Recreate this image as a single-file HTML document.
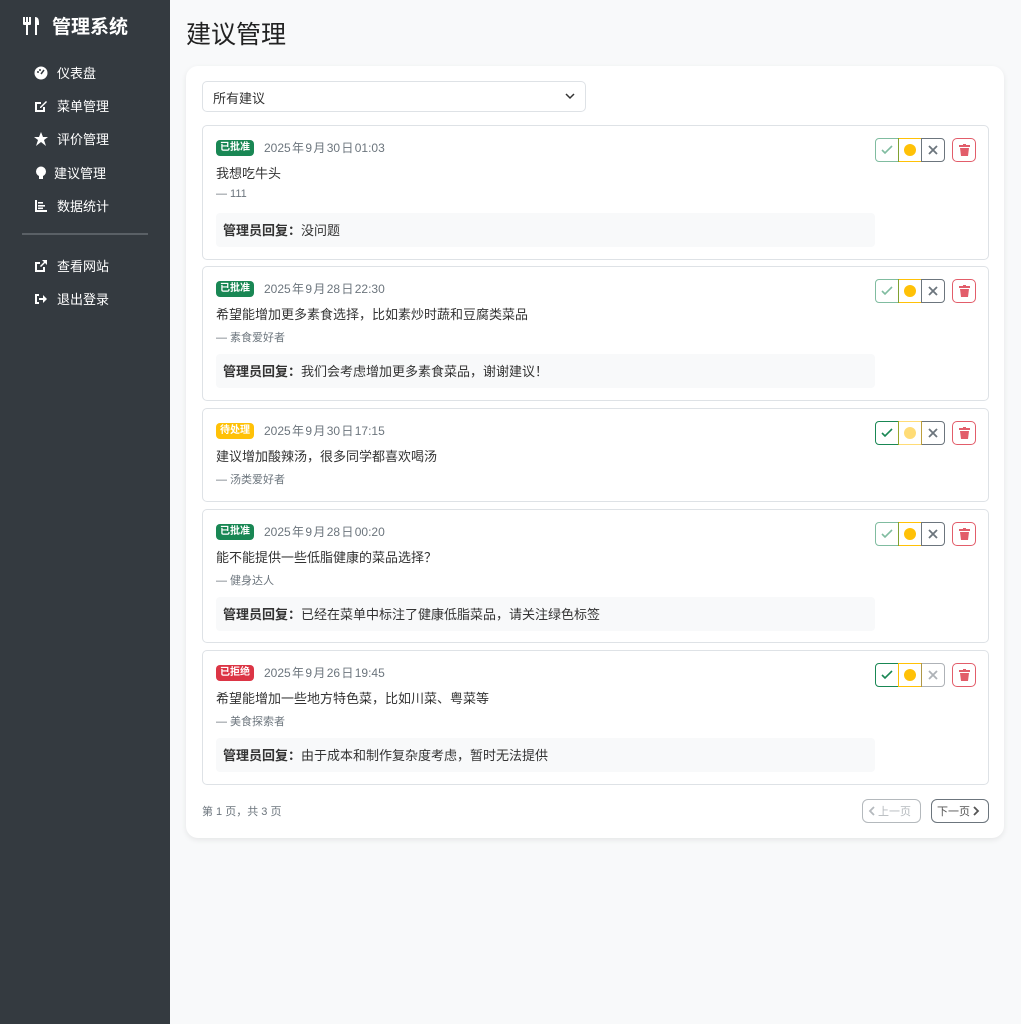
<!DOCTYPE html>
<html><head><meta charset="utf-8"><style>
*{box-sizing:border-box;margin:0;padding:0}
body{width:1021px;height:1024px;background:#f8f9fa;font-family:"Liberation Sans","Noto Sans CJK SC",sans-serif;position:relative;overflow:hidden;color:#212529}
.side{position:absolute;left:0;top:0;width:170px;height:1024px;background:#343a40;color:#fff}
.brand{position:absolute;left:22px;top:12px;font-size:19px;font-weight:700;display:flex;align-items:center;gap:10px}
.nav{position:absolute;left:34px;font-size:13px;display:flex;align-items:center;gap:9px}
.nav svg{width:14px;height:14px}
.hr{position:absolute;left:22px;top:233px;width:126px;height:2px;background:#5a6066}
h1{position:absolute;left:186px;top:15px;font-size:25px;font-weight:400;color:#222}
.card{position:absolute;left:186px;top:66px;width:818px;height:772px;background:#fff;border-radius:12px;box-shadow:0 2px 6px rgba(0,0,0,.08)}
.sel{position:absolute;left:16px;top:15px;width:384px;height:31px;border:1px solid #dee2e6;border-radius:5px;font-size:13px;padding:6px 10px;color:#333}
.sel svg{position:absolute;right:10px;top:10px}
.item{position:absolute;left:16px;width:787px;border:1px solid #dee2e6;border-radius:5px}
.badge{position:absolute;left:13px;top:14px;height:16px;padding:0 4px;border-radius:4px;color:#fff;font-size:10px;font-weight:700;line-height:16px}
.date{position:absolute;left:61px;top:13px;font-size:12px;color:#6c757d;word-spacing:-2px}
.txt{position:absolute;left:13px;top:37px;font-size:13px;color:#333}
.auth{position:absolute;left:13px;top:62px;font-size:11px;color:#6c757d}
.rep{position:absolute;left:13px;top:87px;width:659px;height:34px;background:#f8f9fa;border-radius:4px;font-size:13px;padding:7px 7px;color:#333}
.rep b{font-weight:700}
.bg{position:absolute;left:672px;top:12px;display:flex}
.b{width:24px;height:24px;border:1px solid;display:flex;align-items:center;justify-content:center;background:#fff}
.b1{border-color:#198754;border-radius:4px 0 0 4px}
.b2{border-color:#ffc107;margin-left:-1px}
.b3{border-color:#6c757d;border-radius:0 4px 4px 0;margin-left:-1px}
.fd{opacity:.55}
.del{position:absolute;left:749px;top:12px;width:24px;height:24px;border:1px solid #dc3545;border-radius:5px;display:flex;align-items:center;justify-content:center;opacity:.8}
.pg{position:absolute;top:733px;height:24px;border:1px solid #6c757d;border-radius:6px;font-size:11px;color:#6c757d;padding:0 5px;display:flex;align-items:center;gap:2px}
</style></head><body>
<div class="side">
 <div class="brand"><svg width="20" height="20" viewBox="0 0 20 20" fill="#fff"><rect x="1" y="1" width="2" height="7"/><rect x="4" y="1" width="2" height="7"/><rect x="7" y="1" width="2" height="7"/><rect x="1" y="6" width="8" height="3" rx="1"/><rect x="4" y="8" width="2" height="11"/><path d="M13 1c3 0 4 2 4 6v2h-2v10h-2z"/></svg><span>管理系统</span></div>
 <div class="nav" style="top:63px"><svg viewBox="0 0 14 14"><circle cx="7" cy="7" r="6.5" fill="#fff"/><path d="M7 8l3-4" stroke="#343a40" stroke-width="1.5"/><circle cx="4" cy="6" r="1" fill="#343a40"/><circle cx="6" cy="4" r="1" fill="#343a40"/></svg>仪表盘</div>
 <div class="nav" style="top:96px"><svg viewBox="0 0 14 14"><path d="M1 3h6v2H3v6h6V8h2v5H1z" fill="#fff"/><path d="M6 8l6-6 1 1-6 6H6z" fill="#fff"/></svg>菜单管理</div>
 <div class="nav" style="top:129px"><svg viewBox="0 0 14 14"><path d="M7 0l2 5h5l-4 3 2 6-5-4-5 4 2-6-4-3h5z" fill="#fff"/></svg>评价管理</div>
 <div class="nav" style="top:163px;gap:6px"><svg viewBox="0 0 14 14"><circle cx="7" cy="5.5" r="5" fill="#fff"/><rect x="5" y="10" width="4" height="3" fill="#fff"/></svg>建议管理</div>
 <div class="nav" style="top:196px"><svg viewBox="0 0 14 14" fill="#fff"><rect x="1" y="1" width="2" height="12"/><rect x="1" y="11" width="12" height="2"/><rect x="4" y="3" width="5" height="1.6"/><rect x="4" y="6" width="7" height="1.6"/><rect x="4" y="8.5" width="5" height="1.6"/></svg>数据统计</div>
 <div class="hr"></div>
 <div class="nav" style="top:256px"><svg viewBox="0 0 14 14" fill="#fff"><path d="M1 3h5v2H3v6h6V8h2v5H1z"/><path d="M8 1h5v5l-2-2-4 4-1-1 4-4z"/></svg>查看网站</div>
 <div class="nav" style="top:289px"><svg viewBox="0 0 14 14" fill="#fff"><path d="M1 2h4v2H3v6h2v2H1z"/><path d="M5 6h4V3l4 4-4 4V8H5z"/></svg>退出登录</div>
</div>
<h1>建议管理</h1>
<div class="card">
 <div class="sel">所有建议<svg width="10" height="8" viewBox="0 0 10 8"><path d="M1 2l4 4 4-4" stroke="#333" stroke-width="1.5" fill="none"/></svg></div>

 <div class="item" style="top:59px;height:135px">
  <div class="badge" style="background:#198754">已批准</div><div class="date">2025 年 9 月 30 日 01:03</div>
  <div class="txt">我想吃牛头</div><div class="auth">— 111</div>
  <div class="rep"><b>管理员回复：</b>没问题</div>
  <div class="bg"><div class="b b1 fd"><svg width="12" height="12"><path d="M1 6l3 3 7-7" stroke="#198754" stroke-width="1.6" fill="none"/></svg></div><div class="b b2"><svg width="12" height="12"><circle cx="6" cy="6" r="6" fill="#ffc107"/></svg></div><div class="b b3"><svg width="12" height="12"><path d="M2 2l8 8M10 2l-8 8" stroke="#6c757d" stroke-width="1.8"/></svg></div></div>
  <div class="del"><svg width="11" height="12"><rect x="0" y="1" width="11" height="2" fill="#dc3545"/><rect x="4" y="0" width="3" height="2" fill="#dc3545"/><path d="M1 4h9l-1 8H2z" fill="#dc3545"/></svg></div>
 </div>

 <div class="item" style="top:200px;height:135px">
  <div class="badge" style="background:#198754">已批准</div><div class="date">2025 年 9 月 28 日 22:30</div>
  <div class="txt">希望能增加更多素食选择，比如素炒时蔬和豆腐类菜品</div><div class="auth">— 素食爱好者</div>
  <div class="rep"><b>管理员回复：</b>我们会考虑增加更多素食菜品，谢谢建议！</div>
  <div class="bg"><div class="b b1 fd"><svg width="12" height="12"><path d="M1 6l3 3 7-7" stroke="#198754" stroke-width="1.6" fill="none"/></svg></div><div class="b b2"><svg width="12" height="12"><circle cx="6" cy="6" r="6" fill="#ffc107"/></svg></div><div class="b b3"><svg width="12" height="12"><path d="M2 2l8 8M10 2l-8 8" stroke="#6c757d" stroke-width="1.8"/></svg></div></div>
  <div class="del"><svg width="11" height="12"><rect x="0" y="1" width="11" height="2" fill="#dc3545"/><rect x="4" y="0" width="3" height="2" fill="#dc3545"/><path d="M1 4h9l-1 8H2z" fill="#dc3545"/></svg></div>
 </div>

 <div class="item" style="top:342px;height:94px">
  <div class="badge" style="background:#ffc107">待处理</div><div class="date">2025 年 9 月 30 日 17:15</div>
  <div class="txt">建议增加酸辣汤，很多同学都喜欢喝汤</div><div class="auth">— 汤类爱好者</div>
  <div class="bg"><div class="b b1"><svg width="12" height="12"><path d="M1 6l3 3 7-7" stroke="#198754" stroke-width="1.6" fill="none"/></svg></div><div class="b b2 fd"><svg width="12" height="12"><circle cx="6" cy="6" r="6" fill="#ffc107"/></svg></div><div class="b b3"><svg width="12" height="12"><path d="M2 2l8 8M10 2l-8 8" stroke="#6c757d" stroke-width="1.8"/></svg></div></div>
  <div class="del"><svg width="11" height="12"><rect x="0" y="1" width="11" height="2" fill="#dc3545"/><rect x="4" y="0" width="3" height="2" fill="#dc3545"/><path d="M1 4h9l-1 8H2z" fill="#dc3545"/></svg></div>
 </div>

 <div class="item" style="top:443px;height:134px">
  <div class="badge" style="background:#198754">已批准</div><div class="date">2025 年 9 月 28 日 00:20</div>
  <div class="txt">能不能提供一些低脂健康的菜品选择？</div><div class="auth">— 健身达人</div>
  <div class="rep"><b>管理员回复：</b>已经在菜单中标注了健康低脂菜品，请关注绿色标签</div>
  <div class="bg"><div class="b b1 fd"><svg width="12" height="12"><path d="M1 6l3 3 7-7" stroke="#198754" stroke-width="1.6" fill="none"/></svg></div><div class="b b2"><svg width="12" height="12"><circle cx="6" cy="6" r="6" fill="#ffc107"/></svg></div><div class="b b3"><svg width="12" height="12"><path d="M2 2l8 8M10 2l-8 8" stroke="#6c757d" stroke-width="1.8"/></svg></div></div>
  <div class="del"><svg width="11" height="12"><rect x="0" y="1" width="11" height="2" fill="#dc3545"/><rect x="4" y="0" width="3" height="2" fill="#dc3545"/><path d="M1 4h9l-1 8H2z" fill="#dc3545"/></svg></div>
 </div>

 <div class="item" style="top:584px;height:135px">
  <div class="badge" style="background:#dc3545">已拒绝</div><div class="date">2025 年 9 月 26 日 19:45</div>
  <div class="txt">希望能增加一些地方特色菜，比如川菜、粤菜等</div><div class="auth">— 美食探索者</div>
  <div class="rep"><b>管理员回复：</b>由于成本和制作复杂度考虑，暂时无法提供</div>
  <div class="bg"><div class="b b1"><svg width="12" height="12"><path d="M1 6l3 3 7-7" stroke="#198754" stroke-width="1.6" fill="none"/></svg></div><div class="b b2"><svg width="12" height="12"><circle cx="6" cy="6" r="6" fill="#ffc107"/></svg></div><div class="b b3 fd"><svg width="12" height="12"><path d="M2 2l8 8M10 2l-8 8" stroke="#6c757d" stroke-width="1.8"/></svg></div></div>
  <div class="del"><svg width="11" height="12"><rect x="0" y="1" width="11" height="2" fill="#dc3545"/><rect x="4" y="0" width="3" height="2" fill="#dc3545"/><path d="M1 4h9l-1 8H2z" fill="#dc3545"/></svg></div>
 </div>

 <div style="position:absolute;left:16px;top:737px;font-size:11px;color:#6c757d">第 1 页，共 3 页</div>
 <div class="pg" style="left:676px;width:59px;opacity:.5"><svg width="8" height="10"><path d="M6 1L2 5l4 4" stroke="#6c757d" stroke-width="1.8" fill="none"/></svg>上一页</div>
 <div class="pg" style="left:745px;width:58px;color:#555">下一页<svg width="8" height="10"><path d="M2 1l4 4-4 4" stroke="#555" stroke-width="1.8" fill="none"/></svg></div>
</div>
</body></html>
